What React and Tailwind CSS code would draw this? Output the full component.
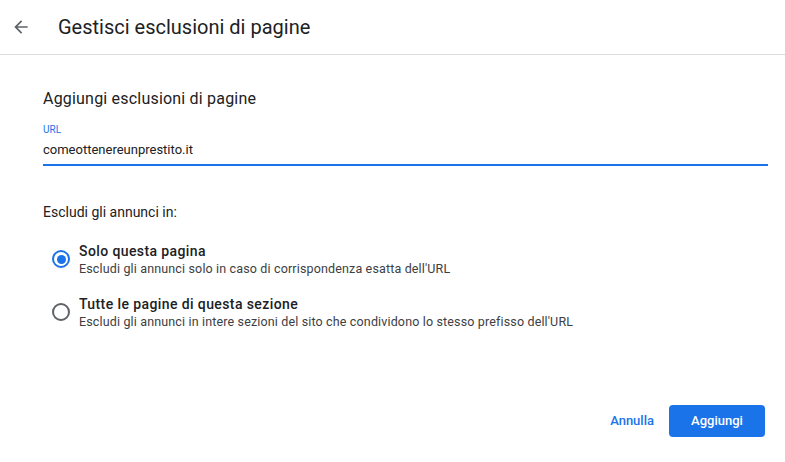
function Radio({ checked }) {
  return (
    <span
      className={`flex h-[18px] w-[18px] shrink-0 items-center justify-center rounded-full border-2 ${
        checked ? "border-[#1a73e8]" : "border-[#5f6368]"
      }`}
    >
      {checked ? <span className="h-[9px] w-[9px] rounded-full bg-[#1a73e8]" /> : null}
    </span>
  );
}

function Option({ checked, title, description }) {
  return (
    <div className="flex items-center pl-[9px]">
      <Radio checked={checked} />
      <div className="ml-[9px]">
        <div className="text-[14px] font-medium leading-[20px] tracking-[0.4px] text-[#202124]">{title}</div>
        <div className="text-[12.5px] leading-[16px] tracking-[0.15px] text-[#3c4043]">{description}</div>
      </div>
    </div>
  );
}

export default function App() {
  return (
    <div className="flex h-[462px] w-[785px] flex-col bg-white font-['Roboto',sans-serif]">
      <div className="flex h-[55px] shrink-0 items-center border-b border-[#dadce0]">
        <svg className="ml-[11px] h-[20px] w-[20px]" viewBox="0 0 24 24" fill="#5f6368">
          <path d="M20 11H7.83l5.59-5.59L12 4l-8 8 8 8 1.41-1.41L7.83 13H20v-2z" />
        </svg>
        <h1 className="ml-[27px] text-[20px] leading-[24px] text-[#202124]">Gestisci esclusioni di pagine</h1>
      </div>

      <div className="flex flex-1 flex-col px-[43px] pt-[32px]">
        <h2 className="text-[16px] leading-[24px] tracking-[0.2px] text-[#202124]">Aggiungi esclusioni di pagine</h2>
        <div className="mr-[-26px] mt-[13px] border-b-2 border-[#1a73e8]">
          <div className="text-[10px] leading-[12px] text-[#1a73e8]">URL</div>
          <div className="pb-[6px] pt-[6px] text-[13px] leading-[16px] text-[#202124]">comeottenereunprestito.it</div>
        </div>

        <div className="mt-[36px] text-[14px] leading-[20px] text-[#202124]">Escludi gli annunci in:</div>

        <div className="mt-[19px] flex flex-col gap-[17px]">
          <Option
            checked
            title="Solo questa pagina"
            description="Escludi gli annunci solo in caso di corrispondenza esatta dell'URL"
          />
          <Option
            title="Tutte le pagine di questa sezione"
            description="Escludi gli annunci in intere sezioni del sito che condividono lo stesso prefisso dell'URL"
          />
        </div>

        <div className="mt-auto mb-[25px] mr-[-23px] flex items-center justify-end gap-[15px]">
          <button className="text-[13px] font-medium text-[#1a73e8]">Annulla</button>
          <button className="h-[32px] w-[96px] rounded-[4px] bg-[#1a73e8] text-[13px] font-medium text-white">
            Aggiungi
          </button>
        </div>
      </div>
    </div>
  );
}
